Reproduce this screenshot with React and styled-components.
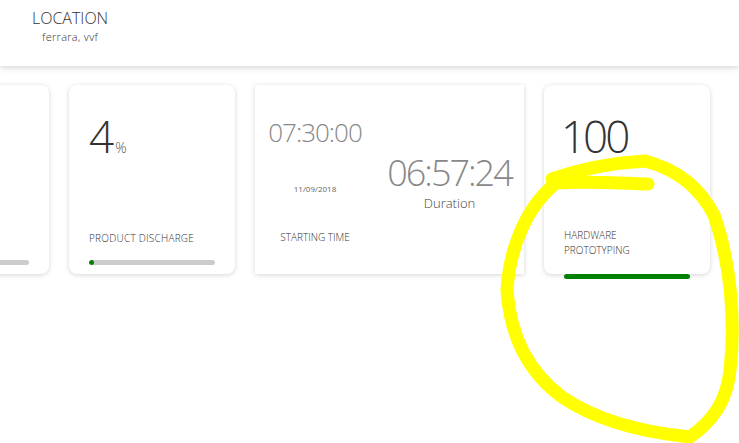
import React from 'react'
import styled, { createGlobalStyle } from 'styled-components'

const GlobalStyle = createGlobalStyle`
  body {
    margin: 0;
    padding: 0;
    min-height: 443px;
    background: #fff;
    font-family: "Open Sans", "Liberation Sans", sans-serif;
    font-weight: 300;
    color: #333;
  }
`;

// 상단 헤더
const Header = styled.header`
  position: relative;
  z-index: 1;
  height: 66px;
  background: #fff;
  box-shadow: 0 2px 6px rgba(0, 0, 0, 0.16);
  padding: 7px 0 0 32px;
  box-sizing: border-box;
`;

const LocationBox = styled.div`
  display: inline-flex;
  flex-direction: column;
  align-items: center;
`;

const LocationTitle = styled.div`
  font-size: 16px;
  line-height: 22px;
  color: #333;
`;

const LocationValue = styled.div`
  font-size: 11px;
  line-height: 16px;
  letter-spacing: 0.3px;
  color: #333;
`;

// 카드 줄 (왼쪽으로 스크롤된 상태)
const CardRow = styled.div`
  display: flex;
  align-items: flex-start;
  gap: 20px;
  margin: 19px 0 0 -117px;
`;

const Card = styled.div`
  position: relative;
  flex: 0 0 ${(p) => p.$width || 166}px;
  height: 189px;
  box-sizing: border-box;
  background: #fff;
  border-radius: ${(p) => (p.$square ? 0 : 8)}px;
  box-shadow: 0 1px 5px rgba(0, 0, 0, 0.17);
  padding: 25px 20px 0 20px;
`;

const ValueArea = styled.div`
  height: ${(p) => p.$h || 121}px;
`;

const BigValue = styled.span`
  font-size: 44px;
  line-height: 52px;
  color: #333;
  letter-spacing: ${(p) => p.$spacing || 0}px;
  margin-left: ${(p) => p.$shift || 0}px;
`;

const Unit = styled.span`
  font-size: 14px;
  color: #555;
  margin-left: 1px;
`;

const Label = styled.div`
  font-size: 10px;
  line-height: 15px;
  color: #333;
  text-transform: uppercase;
  width: 90px;
  letter-spacing: ${(p) => (p.$wrap ? 0 : 0.25)}px;
  white-space: ${(p) => (p.$wrap ? 'normal' : 'nowrap')};
`;

const Track = styled.div`
  margin-top: ${(p) => (p.$full ? 16 : 14)}px;
  height: 5px;
  border-radius: 3px;
  background: ${(p) => (p.$full ? '#008000' : '#cccccc')};
  overflow: hidden;
`;

const Fill = styled.div`
  height: 100%;
  border-radius: 3px;
  background: #008000;
`;

// 시간 카드
const TimeCard = styled(Card)`
  display: grid;
  grid-template-columns: 120px 1fr;
  padding: 0;
`;

const TimeCol = styled.div`
  display: flex;
  flex-direction: column;
  align-items: center;
  padding-top: ${(p) => p.$top}px;
`;

const Clock = styled.div`
  font-size: ${(p) => p.$size}px;
  line-height: 1;
  color: #888;
  letter-spacing: ${(p) => p.$spacing}px;
`;

const DateText = styled.div`
  font-size: 8px;
  font-weight: 400;
  color: #666;
  margin-top: 38px;
`;

const TimeLabel = styled(Label)`
  width: auto;
  letter-spacing: 0;
  margin-top: 36px;
`;

const DurationText = styled.div`
  font-size: 13px;
  line-height: 18px;
  color: #444;
  margin-top: 3px;
`;

// 노란 표시 (스크린샷 위 낙서)
const Scribble = styled.svg`
  position: absolute;
  left: 0;
  top: 0;
  width: 739px;
  height: 443px;
  pointer-events: none;
  z-index: 2;
`;

const App = () => {
  return (
    <>
      <GlobalStyle />
      <Header>
        <LocationBox>
          <LocationTitle>LOCATION</LocationTitle>
          <LocationValue>ferrara, vvf</LocationValue>
        </LocationBox>
      </Header>

      <CardRow>
        <Card>
          <ValueArea />
          <Label>&nbsp;</Label>
          <Track />
        </Card>

        <Card>
          <ValueArea>
            <BigValue>4</BigValue>
            <Unit>%</Unit>
          </ValueArea>
          <Label>Product discharge</Label>
          <Track>
            <Fill style={{ width: '4%' }} />
          </Track>
        </Card>

        <TimeCard $width={269} $square>
          <TimeCol $top={34}>
            <Clock $size={26} $spacing={-1}>07:30:00</Clock>
            <DateText>11/09/2018</DateText>
            <TimeLabel>Starting time</TimeLabel>
          </TimeCol>
          <TimeCol $top={70}>
            <Clock $size={36} $spacing={-2}>06:57:24</Clock>
            <DurationText>Duration</DurationText>
          </TimeCol>
        </TimeCard>

        <Card>
          <ValueArea $h={118}>
            <BigValue $spacing={-3} $shift={-3}>100</BigValue>
          </ValueArea>
          <Label $wrap>Hardware prototyping</Label>
          <Track $full />
        </Card>
      </CardRow>

      <Scribble viewBox="0 0 739 443">
        <path
          d="M 648 184 C 620 183, 585 181, 556 183 C 528 205, 510 245, 507 290 C 510 335, 528 372, 562 397 C 600 423, 650 433, 690 437 C 714 420, 727 400, 730 370 C 736 320, 730 260, 714 215 C 701 190, 680 170, 645 161 C 610 163, 575 171, 552 179"
          fill="none"
          stroke="#ffff00"
          strokeWidth="13"
          strokeLinecap="round"
          strokeLinejoin="round"
        />
      </Scribble>
    </>
  )
}

export default App
